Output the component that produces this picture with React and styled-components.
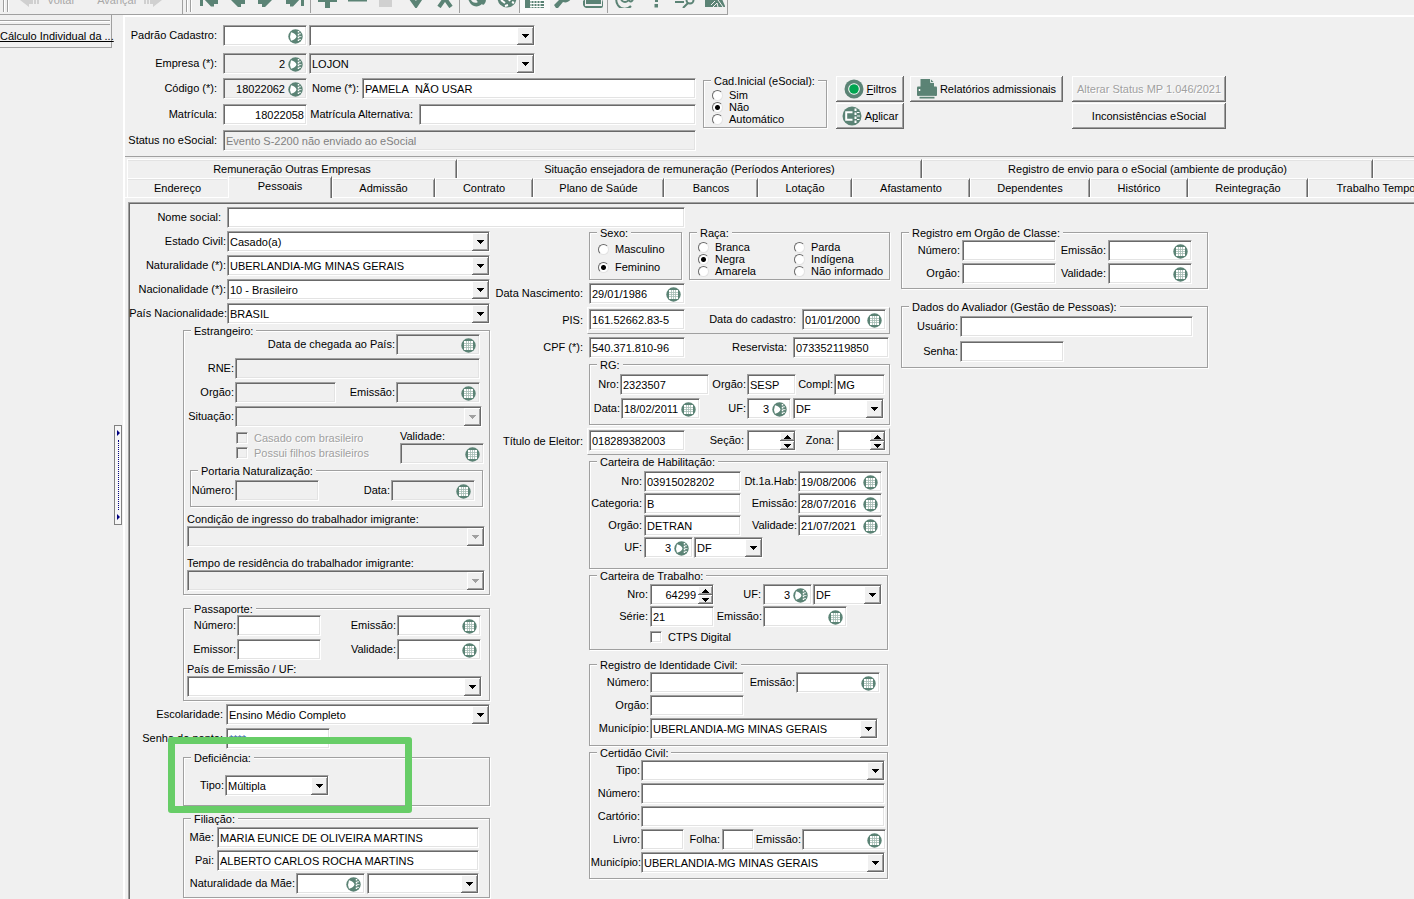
import React from 'react'
import styled, { createGlobalStyle, css } from 'styled-components'

const face = '#f0f0f0'
const shadow = '#a0a0a0'
const dark = '#696969'
const green = '#5b8375'

const GlobalStyle = createGlobalStyle`
    * {
        box-sizing: border-box;
    }
    body {
        margin: 0;
        overflow: hidden;
        background-color: ${face};
    }
    body, input, select, button {
        font-family: "Liberation Sans", Arial, sans-serif;
        font-size: 11px;
        line-height: 12px;
        color: #000;
    }
`

const sunken = css`
    border: 1px solid;
    border-color: ${shadow} #fff #fff ${shadow};
    box-shadow: inset 1px 1px 0 ${dark}, inset -1px -1px 0 #e3e3e3;
`

const raised = css`
    border: 0;
    background-color: ${face};
    box-shadow: inset -1px -1px 0 ${dark}, inset 1px 1px 0 #fff, inset -2px -2px 0 ${shadow};
`

/* page */

const Page = styled.div`
    min-height: 100vh;
    display: flex;
    flex-direction: column;
`

const Toolbar = styled.div`
    height: 15px;
    display: flex;
    overflow: hidden;
`

const ToolGroup = styled.div`
    height: 15px;
    display: flex;
    align-items: flex-end;
    padding: 0 4px 6px 3px;
    border-bottom: 1px solid ${shadow};
    border-right: 1px solid ${shadow};
    width: ${props => props.$w}px;
    flex: none;
`

const Grip = styled.span`
    width: 5px;
    height: 20px;
    margin-right: 3px;
    margin-bottom: -4px;
    border: solid ${shadow};
    border-width: 0 1px;
    box-shadow: inset 1px 0 0 #fff, 1px 0 0 #fff;
    flex: none;
`

const ToolSeparator = styled.span`
    width: 1px;
    height: 20px;
    margin-bottom: -5px;
    background-color: ${shadow};
    flex: none;
`

const ToolButton = styled.button`
    width: ${props => props.$w || 28}px;
    height: 20px;
    padding: 0;
    border: 0;
    background: ${props => props.$pressed ? '#fafafa' : 'none'};
    box-shadow: ${props => props.$pressed ? '0 5px 0 #fafafa' : 'none'};
    color: ${green};
    flex: none;

    svg {
        display: block;
        margin: 0 auto;
    }
`

const NavButton = styled.button`
    height: 20px;
    padding: 0;
    display: flex;
    align-items: center;
    gap: 6px;
    border: 0;
    background: none;
    color: #a8a8a8;
    margin-right: 22px;
    flex: none;
`

const NavText = styled.span`
    padding-top: 4px;
`

const Body = styled.div`
    flex: 1;
    display: flex;
`

const Sidebar = styled.aside`
    width: 112px;
    flex: none;
`

const Shortcuts = styled.div`
    height: 33px;
    border-right: 1px solid ${shadow};
    border-bottom: 1px solid ${shadow};
    padding-top: 5px;
`

const ShortcutGrip = styled.div`
    height: 5px;
    margin-right: 1px;
    border: solid ${shadow};
    border-width: 1px 0;
    box-shadow: inset 0 1px 0 #fff;
`

const Shortcut = styled.a`
    display: block;
    margin-top: 5px;
    color: #000;
    white-space: nowrap;
`

const SplitterTrack = styled.div`
    width: 11px;
    padding: 36px 1px 0 2px;
    display: flex;
    align-items: center;
    flex: none;
`

const Splitter = styled.button`
    width: 8px;
    height: 100px;
    padding: 4px 0;
    border: 1px solid #808080;
    background-color: #f6f6f6;
    display: flex;
    flex-direction: column;
    align-items: center;
    gap: 4px;
`

const SplitterArrow = styled.span`
    border: 3px solid transparent;
    border-left-color: #000080;
    border-right-width: 0;
`

const SplitterDots = styled.span`
    flex: 1;
    border-left: 1px dotted #000080;
`

const Main = styled.main`
    flex: 1;
    min-width: 0;
    display: flex;
    flex-direction: column;
    border: solid #fff;
    border-width: 2px 0 0 2px;
    overflow: hidden;
`

const Header = styled.header`
    padding: 8px 0 5px;
    border-bottom: 1px solid ${shadow};
    display: flex;
    flex-direction: column;
`

const HeaderTop = styled.div`
    display: flex;
    flex-direction: column;
    gap: 7px;
`

const HeaderBottom = styled.div`
    display: flex;
    margin-top: 2px;
`

const HeaderFields = styled.div`
    display: flex;
    flex-direction: column;
    gap: 5px;
    padding-top: 2px;
    margin-right: 7px;
`

const Actions = styled.div`
    display: grid;
    grid-template-columns: 68px 153px 154px;
    grid-auto-rows: 26px;
    gap: 1px 6px;
    margin-left: 9px;
    align-content: start;
`

const Action = styled.button`
    ${raised}
    display: flex;
    align-items: center;
    justify-content: center;
    gap: 3px;
    padding: 0;
    margin-left: ${props => props.$apart ? 3 : 0}px;
    margin-right: ${props => props.$apart ? -3 : 0}px;
    grid-column: ${props => props.$col};
    white-space: nowrap;

    &:disabled {
        color: ${shadow};
        text-shadow: 1px 1px 0 #fff;
    }
`

/* tabs */

const Tabs = styled.nav`
    padding: 2px 0 0 2px;
`

const TabRow = styled.div`
    height: 19px;
    display: flex;
`

const Tab = styled.button`
    width: ${props => props.$w}px;
    flex: none;
    height: ${props => props.$active ? 22 : 19}px;
    margin-top: ${props => props.$active ? -2 : 0}px;
    padding: 0 0 ${props => props.$active ? 3 : 0}px;
    border: solid;
    border-width: 1px 1px 0 1px;
    border-color: #fff ${props => props.$flat ? face : dark} #fff #fff;
    background-color: ${face};
    box-shadow: inset 0 1px 0 #e3e3e3, inset -1px 0 0 ${props => props.$flat ? face : shadow};
    white-space: nowrap;
    position: relative;
    z-index: ${props => props.$active ? 1 : 0};
`

const TabBody = styled.div`
    flex: 1;
    display: flex;
    border-top: 1px solid #fff;
    padding: 4px 0 0 3px;
`

const Panel = styled.section`
    flex: 1;
    border: solid ${shadow};
    border-width: 1px 0 0 1px;
    box-shadow: inset 1px 1px 0 ${dark};
    padding: 4px 0 0 1px;
`

const Columns = styled.div`
    display: grid;
    grid-template-columns: 360px 411px auto;
    justify-content: start;
    align-items: start;
    margin-top: 1px;
`

const Stack = styled.div`
    display: flex;
    flex-direction: column;
    align-items: flex-start;
    gap: ${props => props.$gap ?? 3}px;
    padding-top: ${props => props.$pt || 0}px;
    padding-left: ${props => props.$pl || 0}px;
`

const Row = styled.div`
    display: flex;
    align-items: ${props => props.$align || 'center'};
    gap: ${props => props.$gap || 0}px;
`

const Frame = styled.div`
    display: flex;
    width: 303px;
    padding: 1px 3px 3px 1px;
    border: 1px solid;
    border-color: #fff ${shadow} ${shadow} #fff;
`

const Group = styled.fieldset`
    width: ${props => props.$w || 307}px;
    min-width: 0;
    margin: ${props => props.$mt || 0}px 0 0 ${props => props.$ml || 0}px;
    padding: ${props => props.$pad || 0};
    border: 1px solid ${shadow};
    box-shadow: 1px 1px 0 #fff, inset 1px 1px 0 #fff;
    flex: none;
`

const Legend = styled.legend`
    height: 6px;
    margin-left: 7px;
    padding: 0 3px;
    line-height: 8px;
    background-color: ${face};
`

/* fields */

const FieldLabel = styled.label`
    display: flex;
    align-items: center;
    white-space: nowrap;
`

const Caption = styled.span`
    width: ${props => props.$w}px;
    padding-right: ${props => props.$pr ?? 3}px;
    display: flex;
    justify-content: flex-end;
    padding-bottom: 1px;
    flex: none;
`

const BlockLabel = styled.label`
    display: flex;
    flex-direction: column;
    gap: 1px;
`

const Shell = styled.span`
    ${sunken}
    width: ${props => props.$w}px;
    height: 21px;
    display: flex;
    align-items: center;
    flex: none;
    background-color: ${props => props.$off ? face : '#fff'};
`

const Entry = styled.input`
    flex: 1;
    width: 0;
    height: 17px;
    padding: 0 2px;
    border: 0;
    outline: 0;
    background: none;
    text-align: ${props => props.$right ? 'right' : 'left'};
    color: ${props => props.$color || '#000'};
`

const IconButton = styled.button`
    width: 14px;
    height: 15px;
    margin: 2px 4px 0 1px;
    padding: 0;
    border: 0;
    background: none;
    flex: none;

    svg {
        display: block;
    }
`

const ComboShell = styled(Shell)`
    display: grid;
    align-items: stretch;
`

const Select = styled.select`
    grid-area: 1 / 1;
    min-width: 0;
    appearance: none;
    padding: 0 20px 0 2px;
    border: 0;
    outline: 0;
    background: none;
    color: #000;
    opacity: 1;
`

const DropMark = styled.span`
    ${raised}
    grid-area: 1 / 1;
    justify-self: end;
    width: 17px;
    margin-top: 1px;
    display: flex;
    align-items: center;
    justify-content: center;
    pointer-events: none;
    color: ${props => props.$off ? shadow : '#000'};
`

const SpinButtons = styled.span`
    width: 15px;
    display: flex;
    flex-direction: column;
    margin-top: 1px;
    flex: none;
`

const SpinButton = styled.button`
    ${raised}
    height: 9px;
    padding: 0;
    display: flex;
    align-items: center;
    justify-content: center;
`

const ChoiceLabel = styled.label`
    display: flex;
    align-items: center;
    gap: 6px;
    height: ${props => props.$h || 12}px;
    white-space: nowrap;
    color: ${props => props.$off ? shadow : '#000'};
    text-shadow: ${props => props.$off ? '1px 1px 0 #fff' : 'none'};
`

const RadioMark = styled.input`
    appearance: none;
    width: 11px;
    height: 11px;
    margin: 0;
    border: 1px solid;
    border-color: ${dark} #e3e3e3 #e3e3e3 ${dark};
    border-radius: 50%;
    background-color: #fff;

    &:checked {
        background-image: radial-gradient(circle, #000 2px, transparent 3px);
    }
`

const CheckMark = styled.input`
    ${sunken}
    appearance: none;
    width: 12px;
    height: 12px;
    margin: 0;
    background-color: ${props => props.disabled ? face : '#fff'};
`

const RadioGrid = styled.div`
    display: grid;
    grid-template-columns: 96px auto;
    justify-content: start;
    padding-left: 8px;
`

const Marked = styled.div`
    position: relative;
    margin: 2px 0 0 53px;
`

const Highlight = styled.div`
    position: absolute;
    left: -15px;
    top: -17px;
    width: 244px;
    height: 76px;
    border: 7px solid #67cd67;
    border-radius: 3px;
    pointer-events: none;
`

/* icons */

const Triangle = ({ up }) => (
    <svg width="7" height="4" viewBox="0 0 7 4" shapeRendering="crispEdges">
        <path d={up ? 'M0 4h7L3.5 0z' : 'M0 0h7L3.5 4z'} fill="currentColor" />
    </svg>
)

const CalendarIcon = () => (
    <svg width="15" height="15" viewBox="0 0 15 15">
        <circle cx="7.500" cy="7.500" r="7.200" fill={green} />
        <rect x="3" y="3" width="9" height="9" fill="#fff" />
        <path d="M3 5.500h9M3 7.500h9M3 9.500h9M5.500 3v9M7.500 3v9M9.500 3v9" stroke="#a3bbb3" strokeWidth="0.800" />
    </svg>
)

const LookupIcon = () => (
    <svg width="15" height="15" viewBox="0 0 15 15">
        <circle cx="7.500" cy="7.500" r="7.200" fill={green} />
        <path d="M3 3.200q5 1.500 5.500 4.300-.5 2.800-5.500 4.300-1.800-4.300 0-8.600z" fill="#fff" />
        <path d="M10.500 2v11" stroke="#fff" strokeWidth="1.500" strokeDasharray="1.600 1.200" />
        <path d="M11 4.800h2M11 7.600h2.500M11 10.400h2" stroke="#fff" strokeWidth="0.800" />
    </svg>
)

const RecordIcon = () => (
    <svg width="20" height="20" viewBox="0 0 20 20">
        <circle cx="10" cy="10" r="9.500" fill={green} />
        <circle cx="10" cy="10" r="5.800" fill="#fff" />
        <circle cx="10" cy="10" r="4.800" fill="#00a550" />
    </svg>
)

const ApplyIcon = () => (
    <svg width="20" height="20" viewBox="0 0 20 20">
        <circle cx="10" cy="10" r="9.500" fill={green} />
        <path d="M10.500 6.200H4.200v7.600h6.300" fill="none" stroke="#fff" strokeWidth="2" />
        <path d="M13.500 2.500v15" stroke="#fff" strokeWidth="2" strokeDasharray="2.500 1.500" />
        <path d="M15 6.500h2.500M15 10h3M15 13.500h2.500" stroke="#fff" strokeWidth="1" />
    </svg>
)

const PrinterIcon = () => (
    <svg width="20" height="20" viewBox="0 0 20 20">
        <path d="M3.500 0h10l3.500 3.500V9h-13.500z" fill={green} />
        <path d="M13.500 0v3.500H17" stroke="#fff" strokeWidth="0.8" fill="none" />
        <rect y="7.500" width="20" height="9.500" rx="1" fill={green} />
        <path d="M2.500 10v2" stroke="#fff" strokeWidth="1.500" />
        <path d="M2.500 17.500h15v2h-15z" fill={green} />
        <path d="M2 17.300h16" stroke="#fff" strokeWidth="0.6" />
    </svg>
)

const toolPaths = {
    first: <path d="M1 3h3v15H1zM4 10l8-8h3v4h4v10h-4v2.500h-3z" />,
    prev: <path d="M1 10l9-8h3v4h4v10h-4v3h-3z" />,
    next: <path d="M18 10L9 2H6v4H2v10h4v3h3z" />,
    last: <path d="M19 3h-3v15h3zM16 10L8 2H5v4H1v10h4v2.500h3z" />,
    plus: <path d="M7 2h5v7h7v5h-7v6H7v-6H0V9h7z" />,
    minus: <path d="M0 9h19v4.500H0z" />,
    save: <path d="M3 2h13v17H3z" fill="#d0d0d0" />,
    check: <path d="M5 10l5 7 6-9" fill="none" stroke="currentColor" strokeWidth="4.500" />,
    cross: <path d="M4 2l12 17M16 2L4 19" fill="none" stroke="currentColor" strokeWidth="4" />,
    refresh: <path d="M0 9l4 3c1 2 4 4 7 2-2-1-2-4-1-6l4 4 5-1c0 3-1 5-3 6l-1-1c-4 4-11 3-13-3z" />,
    web: (
        <>
            <circle cx="10" cy="10" r="9.500" />
            <path d="M4 12l4 3M11 10l2 3M15 14l2 1M8 18l3-1" stroke="#fff" strokeWidth="2" fill="none" />
        </>
    ),
    sheet: (
        <>
            <path d="M0 1h19v19H0z" />
            <path d="M5 12.500h14M5 15.500h14M5 18.500h14M6 12v8M9 12v8M12 12v8M15 12v8" stroke="#fff" strokeWidth="1" />
        </>
    ),
    wrench: <path d="M0 17l7-7a6 6 0 0 1 9-7l-3 4 4 4c-2 3-5 4-8 3l-5 6H2z" />,
    books: <path d="M3 1h15v15H3zM0 13l2-2v7h17v-7l1 3v4q0 2-2 2H3q-2 0-3-3z" />,
    mail: (
        <g fill="none" stroke="currentColor" strokeWidth="2">
            <circle cx="10" cy="10" r="4" />
            <path d="M14 6v5c0 4 4 3 4-1a8.500 8.500 0 1 0-2 8" />
        </g>
    ),
    help: <path d="M5 6a5 5 0 1 1 7 5v3H9V9c3 0 3-3 0-3-1 0-1 1-1 2zM8.500 16h3.500v3.500H8.500z" />,
    hand: (
        <g fill="none" stroke="currentColor" strokeWidth="2">
            <path d="M0 14h9M8 20l5-5" />
            <circle cx="15" cy="12" r="3.500" />
            <path d="M9 4l4 5" />
        </g>
    ),
    exit: (
        <>
            <path d="M0 4h14l6 14v1H0z" />
            <path d="M8 19l4-4 1 4M13 12l5 7M6 17l4-4" stroke={face} fill="none" />
        </>
    ),
}

const Tool = ({ name, title, w, pressed }) => (
    <ToolButton $w={w} $pressed={pressed} aria-label={title}>
        <svg width="20" height="20" viewBox="0 0 20 20" fill="currentColor">{toolPaths[name]}</svg>
    </ToolButton>
)

/* controls */

const Field = ({ label, lw, pr, children }) => (
    <FieldLabel>
        <Caption $w={lw} $pr={pr}>{label}</Caption>
        {children}
    </FieldLabel>
)

const TextBox = ({ w, value, off, right, color }) => (
    <Shell $w={w} $off={off}>
        <Entry defaultValue={value} readOnly={off} $right={right} $color={color} />
    </Shell>
)

const DateBox = ({ w = 84, value, off }) => (
    <Shell $w={w} $off={off}>
        <Entry defaultValue={value} readOnly={off} />
        <IconButton type="button" aria-label="Calendário"><CalendarIcon /></IconButton>
    </Shell>
)

const LookupBox = ({ w = 84, value, off }) => (
    <Shell $w={w} $off={off}>
        <Entry defaultValue={value} readOnly={off} $right />
        <IconButton type="button" aria-label="Pesquisar"><LookupIcon /></IconButton>
    </Shell>
)

const Combo = ({ w, value = '', off, gray, label }) => (
    <ComboShell $w={w} $off={off || gray}>
        <Select defaultValue={value} disabled={off} aria-label={label}>
            <option value={value}>{value}</option>
        </Select>
        <DropMark $off={off}><Triangle /></DropMark>
    </ComboShell>
)

const Spin = ({ w, value }) => (
    <Shell $w={w}>
        <Entry defaultValue={value} $right />
        <SpinButtons>
            <SpinButton type="button" aria-label="Aumentar"><Triangle up /></SpinButton>
            <SpinButton type="button" aria-label="Diminuir"><Triangle /></SpinButton>
        </SpinButtons>
    </Shell>
)

const Radio = ({ name, label, h, checked }) => (
    <ChoiceLabel $h={h}>
        <RadioMark type="radio" name={name} defaultChecked={checked} />
        {label}
    </ChoiceLabel>
)

const Check = ({ label, off, h }) => (
    <ChoiceLabel $off={off} $h={h}>
        <CheckMark type="checkbox" disabled={off} />
        {label}
    </ChoiceLabel>
)

const upperTabs = [
    { name: 'Remuneração Outras Empresas', w: 330 },
    { name: 'Situação ensejadora de remuneração (Períodos Anteriores)', w: 465 },
    { name: 'Registro de envio para o eSocial (ambiente de produção)', w: 451 },
    { name: '', w: 330 },
]

const lowerTabs = [
    { name: 'Endereço', w: 101, flat: true },
    { name: 'Pessoais', w: 104, active: true },
    { name: 'Admissão', w: 103 },
    { name: 'Contrato', w: 98 },
    { name: 'Plano de Saúde', w: 131 },
    { name: 'Bancos', w: 94 },
    { name: 'Lotação', w: 94 },
    { name: 'Afastamento', w: 118 },
    { name: 'Dependentes', w: 120 },
    { name: 'Histórico', w: 98 },
    { name: 'Reintegração', w: 120 },
    { name: 'Trabalho Temporário', w: 158 },
]

const TopToolbar = () => (
    <Toolbar>
        <ToolGroup $w={183}>
            <Grip />
            <NavButton>
                <svg width="30" height="20" viewBox="0 0 30 20" fill="#d0d0d0"><path d="M9 12l9-9v5h4v8h-4v3zM23 8h2v8h-2zM26 8h2v8h-2z" /></svg>
                <NavText>Voltar</NavText>
            </NavButton>
            <NavButton>
                <NavText>Avançar</NavText>
                <svg width="20" height="20" viewBox="0 0 20 20" fill="#d0d0d0"><path d="M19 12l-9-9v5H7v8h3v3zM4 8h2v8H4zM1 8h2v8H1z" /></svg>
            </NavButton>
        </ToolGroup>
        <ToolGroup $w={545}>
            <Grip />
            <Tool name="first" title="Primeiro" w={30} />
            <Tool name="prev" title="Anterior" />
            <Tool name="next" title="Próximo" />
            <Tool name="last" title="Último" w={30} />
            <ToolSeparator />
            <Tool name="plus" title="Incluir" w={34} />
            <Tool name="minus" title="Excluir" w={26} />
            <Tool name="save" title="Salvar" w={30} />
            <Tool name="check" title="Confirmar" w={30} />
            <Tool name="cross" title="Cancelar" />
            <ToolSeparator />
            <Tool name="refresh" title="Atualizar" w={34} />
            <Tool name="web" title="Web" w={25} />
            <ToolSeparator />
            <Tool name="sheet" title="Planilha" w={30} pressed />
            <Tool name="wrench" title="Configurar" />
            <Tool name="books" title="Relatórios" w={29} />
            <ToolSeparator />
            <Tool name="mail" title="E-mail" w={34} />
            <Tool name="help" title="Ajuda" />
            <Tool name="hand" title="Suporte" w={30} />
            <Tool name="exit" title="Sair" w={30} />
        </ToolGroup>
    </Toolbar>
)

const EmployeeHeader = () => (
    <Header>
        <HeaderTop>
            <Row $gap={2}>
                <Field label="Padrão Cadastro:" lw={98} pr={6}><LookupBox /></Field>
                <Combo w={226} label="Padrão Cadastro" />
            </Row>
            <Row $gap={2}>
                <Field label="Empresa (*):" lw={98} pr={6}><LookupBox value="2" off /></Field>
                <Combo w={226} value="LOJON" gray label="Empresa" />
            </Row>
        </HeaderTop>
        <HeaderBottom>
            <HeaderFields>
                <Row>
                    <Field label="Código (*):" lw={98} pr={6}><LookupBox value="18022062" off /></Field>
                    <Field label="Nome (*):" lw={55}><TextBox w={334} value={'PAMELA\u00a0 NÃO USAR'} /></Field>
                </Row>
                <Row>
                    <Field label="Matrícula:" lw={98} pr={6}><TextBox w={84} value="18022058" right /></Field>
                    <Field label="Matrícula Alternativa:" lw={112} pr={6}><TextBox w={277} /></Field>
                </Row>
                <Field label="Status no eSocial:" lw={98} pr={6}>
                    <TextBox w={473} value="Evento S-2200 não enviado ao eSocial" off color="#808080" />
                </Field>
            </HeaderFields>
            <Stack $pt={1}>
                <Group $w={124} $pad="6px 0 2px">
                    <Legend>Cad.Inicial (eSocial):</Legend>
                    <Stack $gap={0} $pl={8}>
                        <Radio name="cad" label="Sim" />
                        <Radio name="cad" label="Não" checked />
                        <Radio name="cad" label="Automático" />
                    </Stack>
                </Group>
            </Stack>
            <Actions>
                <Action $col={1}><RecordIcon /><span><u>F</u>iltros</span></Action>
                <Action $col={2}><PrinterIcon />Relatórios admissionais</Action>
                <Action $col={3} $apart disabled>Alterar Status MP 1.046/2021</Action>
                <Action $col={1}><ApplyIcon /><span>A<u>p</u>licar</span></Action>
                <Action $col={3} $apart>Inconsistências eSocial</Action>
            </Actions>
        </HeaderBottom>
    </Header>
)

const LeftColumn = () => (
    <Stack $pt={2}>
        <Field label="Estado Civil:" lw={97} pr={1}><Combo w={263} value="Casado(a)" /></Field>
        <Field label="Naturalidade (*):" lw={97} pr={1}><Combo w={263} value="UBERLANDIA-MG MINAS GERAIS" /></Field>
        <Field label="Nacionalidade (*):" lw={97} pr={1}><Combo w={263} value="10 - Brasileiro" /></Field>
        <Field label="País Nacionalidade:" lw={97} pr={0}><Combo w={263} value="BRASIL" /></Field>

        <Group $ml={53} $pad="1px 0 3px">
            <Legend>Estrangeiro:</Legend>
            <Stack>
                <Field label="Data de chegada ao País:" lw={212} pr={1}><DateBox off /></Field>
                <Field label="RNE:" lw={51} pr={1}><TextBox w={245} off /></Field>
                <Row>
                    <Field label="Orgão:" lw={51} pr={1}><TextBox w={101} off /></Field>
                    <Field label="Emissão:" lw={60} pr={1}><DateBox off /></Field>
                </Row>
                <Field label="Situação:" lw={51} pr={1}><Combo w={247} off /></Field>
                <Row $align="flex-start">
                    <Stack $gap={0} $pl={52}>
                        <Check label="Casado com brasileiro" off h={15} />
                        <Check label="Possui filhos brasileiros" off h={15} />
                    </Stack>
                    <Stack $pl={31}>
                        <BlockLabel>Validade:<DateBox off /></BlockLabel>
                    </Stack>
                </Row>
                <Group $w={293} $ml={6} $pad="7px 0 5px">
                    <Legend>Portaria Naturalização:</Legend>
                    <Row>
                        <Field label="Número:" lw={44} pr={1}><TextBox w={84} off /></Field>
                        <Field label="Data:" lw={72} pr={1}><DateBox off /></Field>
                    </Row>
                </Group>
            </Stack>
            <Stack $gap={10} $pt={6} $pl={3}>
                <BlockLabel>Condição de ingresso do trabalhador imigrante:<Combo w={298} off /></BlockLabel>
                <BlockLabel>Tempo de residência do trabalhador imigrante:<Combo w={298} off /></BlockLabel>
            </Stack>
        </Group>

        <Group $ml={53} $mt={7} $pad="4px 0 3px">
            <Legend>Passaporte:</Legend>
            <Stack>
                <Row>
                    <Field label="Número:" lw={53} pr={1}><TextBox w={84} /></Field>
                    <Field label="Emissão:" lw={76} pr={1}><DateBox /></Field>
                </Row>
                <Row>
                    <Field label="Emissor:" lw={53} pr={1}><TextBox w={84} /></Field>
                    <Field label="Validade:" lw={76} pr={1}><DateBox /></Field>
                </Row>
                <Stack $pl={3}>
                    <BlockLabel>País de Emissão / UF:<Combo w={295} /></BlockLabel>
                </Stack>
            </Stack>
        </Group>

        <Field label="Escolaridade:" lw={96}><Combo w={264} value="Ensino Médio Completo" /></Field>
        <Field label="Senha do ponto:" lw={96}><TextBox w={104} value="****" color="#31669c" /></Field>

        <Marked>
            <Group $pad="15px 0 9px">
                <Legend>Deficiência:</Legend>
                <Field label="Tipo:" lw={41} pr={1}><Combo w={104} value="Múltipla" /></Field>
            </Group>
            <Highlight />
        </Marked>

        <Group $ml={53} $mt={6} $pad="6px 0 3px">
            <Legend>Filiação:</Legend>
            <Stack $gap={2}>
                <Field label="Mãe:" lw={33}><TextBox w={262} value="MARIA EUNICE DE OLIVEIRA MARTINS" /></Field>
                <Field label="Pai:" lw={33}><TextBox w={262} value="ALBERTO CARLOS ROCHA MARTINS" /></Field>
                <Row $gap={2}>
                    <Field label="Naturalidade da Mãe:" lw={112} pr={1}><LookupBox w={69} /></Field>
                    <Combo w={112} label="Naturalidade da Mãe" />
                </Row>
            </Stack>
        </Group>
    </Stack>
)

const MiddleColumn = () => (
    <Stack>
        <Row $gap={7} $align="stretch">
            <Group $w={93} $ml={99} $pad="5px 0 3px">
                <Legend>Sexo:</Legend>
                <Stack $gap={0} $pl={8}>
                    <Radio name="sexo" label="Masculino" h={18} />
                    <Radio name="sexo" label="Feminino" h={18} checked />
                </Stack>
            </Group>
            <Group $w={201} $pad="6px 0 2px">
                <Legend>Raça:</Legend>
                <RadioGrid>
                    <Radio name="raca" label="Branca" />
                    <Radio name="raca" label="Parda" />
                    <Radio name="raca" label="Negra" checked />
                    <Radio name="raca" label="Indígena" />
                    <Radio name="raca" label="Amarela" />
                    <Radio name="raca" label="Não informado" />
                </RadioGrid>
            </Group>
        </Row>
        <Field label="Data Nascimento:" lw={99} pr={6}><DateBox w={96} value="29/01/1986" /></Field>
        <Row>
            <Caption as="label" htmlFor="pis" $w={97} $pr={4}>PIS:</Caption>
            <Frame>
                <Shell $w={96}><Entry id="pis" defaultValue="161.52662.83-5" /></Shell>
                <Field label="Data do cadastro:" lw={117} pr={6}><DateBox value="01/01/2000" /></Field>
            </Frame>
        </Row>
        <Row>
            <Field label="CPF (*):" lw={99} pr={6}><TextBox w={96} value="540.371.810-96" /></Field>
            <Field label="Reservista:" lw={108} pr={6}><TextBox w={96} value="073352119850" /></Field>
        </Row>
        <Group $w={301} $ml={99} $pad="7px 0 5px">
            <Legend>RG:</Legend>
            <Stack>
                <Row>
                    <Field label="Nro:" lw={30} pr={1}><TextBox w={89} value="2323507" /></Field>
                    <Field label="Orgão:" lw={38} pr={1}><TextBox w={49} value="SESP" /></Field>
                    <Field label="Compl:" lw={38} pr={1}><TextBox w={51} value="MG" /></Field>
                </Row>
                <Row $gap={2}>
                    <Field label="Data:" lw={31} pr={1}><DateBox w={79} value="18/02/2011" /></Field>
                    <Field label="UF:" lw={45} pr={1}><LookupBox w={44} value="3" /></Field>
                    <Combo w={91} value="DF" label="UF" />
                </Row>
            </Stack>
        </Group>
        <Row>
            <Caption as="label" htmlFor="titulo" $w={97} $pr={4}>Título de Eleitor:</Caption>
            <Frame>
                <Shell $w={96}><Entry id="titulo" defaultValue="018289382003" /></Shell>
                <Field label="Seção:" lw={62}><Spin w={49} /></Field>
                <Field label="Zona:" lw={41}><Spin w={49} /></Field>
            </Frame>
        </Row>
        <Group $w={299} $ml={99} $pad="7px 0 10px">
            <Legend>Carteira de Habilitação:</Legend>
            <Stack $gap={1}>
                <Row>
                    <Field label="Nro:" lw={54} pr={2}><TextBox w={97} value="03915028202" /></Field>
                    <Field label="Dt.1a.Hab:" lw={57} pr={1}><DateBox value="19/08/2006" /></Field>
                </Row>
                <Row>
                    <Field label="Categoria:" lw={54} pr={2}><TextBox w={97} value="B" /></Field>
                    <Field label="Emissão:" lw={57} pr={1}><DateBox value="28/07/2016" /></Field>
                </Row>
                <Row>
                    <Field label="Orgão:" lw={54} pr={2}><TextBox w={97} value="DETRAN" /></Field>
                    <Field label="Validade:" lw={57} pr={1}><DateBox value="21/07/2021" /></Field>
                </Row>
                <Row $gap={1}>
                    <Field label="UF:" lw={54} pr={2}><LookupBox w={49} value="3" /></Field>
                    <Combo w={69} value="DF" label="UF" />
                </Row>
            </Stack>
        </Group>
        <Group $w={299} $ml={99} $pad="6px 0 3px">
            <Legend>Carteira de Trabalho:</Legend>
            <Stack $gap={1}>
                <Row $gap={1}>
                    <Field label="Nro:" lw={60} pr={2}><Spin w={64} value="64299" /></Field>
                    <Field label="UF:" lw={48} pr={2}><LookupBox w={49} value="3" /></Field>
                    <Combo w={69} value="DF" label="UF" />
                </Row>
                <Row $gap={1}>
                    <Field label="Série:" lw={60} pr={2}><TextBox w={64} value="21" /></Field>
                    <Field label="Emissão:" lw={48} pr={1}><DateBox /></Field>
                </Row>
                <Stack $pl={60}><Check label="CTPS Digital" h={18} /></Stack>
            </Stack>
        </Group>
        <Group $w={299} $ml={99} $mt={8} $pad="5px 0 6px">
            <Legend>Registro de Identidade Civil:</Legend>
            <Stack $gap={2}>
                <Row>
                    <Field label="Número:" lw={60} pr={1}><TextBox w={94} /></Field>
                    <Field label="Emissão:" lw={52} pr={1}><DateBox /></Field>
                </Row>
                <Field label="Orgão:" lw={60} pr={1}><TextBox w={94} /></Field>
                <Field label="Município:" lw={60} pr={1}><Combo w={228} value="UBERLANDIA-MG MINAS GERAIS" /></Field>
            </Stack>
        </Group>
        <Group $w={299} $ml={99} $pad="5px 0">
            <Legend>Certidão Civil:</Legend>
            <Stack $gap={2}>
                <Field label="Tipo:" lw={51} pr={1}><Combo w={244} /></Field>
                <Field label="Número:" lw={51} pr={1}><TextBox w={244} /></Field>
                <Field label="Cartório:" lw={51} pr={1}><TextBox w={244} /></Field>
                <Row>
                    <Field label="Livro:" lw={51} pr={1}><TextBox w={43} /></Field>
                    <Field label="Folha:" lw={38} pr={2}><TextBox w={32} /></Field>
                    <Field label="Emissão:" lw={48} pr={1}><DateBox /></Field>
                </Row>
                <Field label="Município:" lw={51} pr={0}><Combo w={244} value="UBERLANDIA-MG MINAS GERAIS" /></Field>
            </Stack>
        </Group>
    </Stack>
)

const RightColumn = () => (
    <Stack $gap={14}>
        <Group $pad="5px 0 4px">
            <Legend>Registro em Orgão de Classe:</Legend>
            <Stack $gap={2}>
                <Row>
                    <Field label="Número:" lw={60} pr={2}><TextBox w={94} /></Field>
                    <Field label="Emissão:" lw={52} pr={2}><DateBox /></Field>
                </Row>
                <Row>
                    <Field label="Orgão:" lw={60} pr={2}><TextBox w={94} /></Field>
                    <Field label="Validade:" lw={52} pr={2}><DateBox /></Field>
                </Row>
            </Stack>
        </Group>
        <Group $pad="7px 0 5px">
            <Legend>Dados do Avaliador (Gestão de Pessoas):</Legend>
            <Stack $gap={4}>
                <Field label="Usuário:" lw={58} pr={2}><TextBox w={233} /></Field>
                <Field label="Senha:" lw={58} pr={2}><TextBox w={104} /></Field>
            </Stack>
        </Group>
    </Stack>
)

const App = () => {
    return (
        <>
            <GlobalStyle />
            <Page>
                <TopToolbar />
                <Body>
                    <Sidebar>
                        <Shortcuts>
                            <ShortcutGrip />
                            <Shortcut href="#calculo">Cálculo Individual da ...</Shortcut>
                        </Shortcuts>
                    </Sidebar>
                    <SplitterTrack>
                        <Splitter aria-label="Recolher painel">
                            <SplitterArrow />
                            <SplitterDots />
                            <SplitterArrow />
                        </Splitter>
                    </SplitterTrack>
                    <Main>
                        <EmployeeHeader />
                        <Tabs>
                            <TabRow>
                                {upperTabs.map((tab) => <Tab key={tab.name} $w={tab.w}>{tab.name}</Tab>)}
                            </TabRow>
                            <TabRow>
                                {lowerTabs.map((tab) =>
                                    <Tab key={tab.name} $w={tab.w} $flat={tab.flat} $active={tab.active}>{tab.name}</Tab>
                                )}
                            </TabRow>
                        </Tabs>
                        <TabBody>
                            <Panel>
                                <Field label="Nome social:" lw={97} pr={6}><TextBox w={458} /></Field>
                                <Columns>
                                    <LeftColumn />
                                    <MiddleColumn />
                                    <RightColumn />
                                </Columns>
                            </Panel>
                        </TabBody>
                    </Main>
                </Body>
            </Page>
        </>
    )
}

export default App
